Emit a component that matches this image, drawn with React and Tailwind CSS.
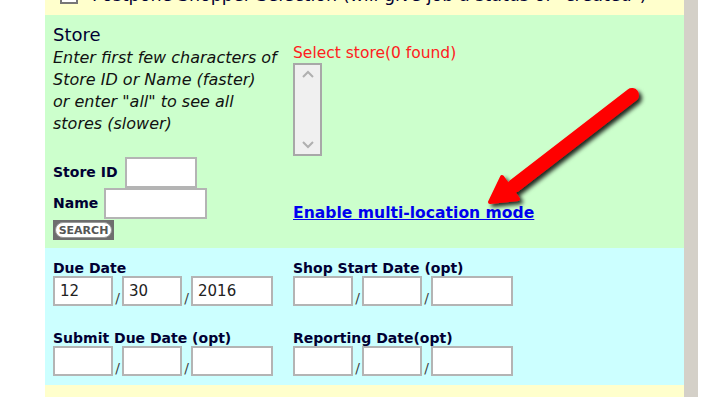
import React from 'react';

const font = { fontFamily: '"DejaVu Sans", Verdana, sans-serif' };

const Box = ({ w, value }) => (
  <input
    type="text"
    readOnly
    value={value || ''}
    className={`${w} h-[30px] border-2 border-[#b4b4b4] bg-white px-[5px] text-[15px] text-[#222] outline-none`}
  />
);

const DateRow = ({ label, values = [] }) => (
  <div>
    <div className="h-[16px] whitespace-nowrap text-[14px] font-bold leading-[16px] text-[#000033]">{label}</div>
    <div className="flex items-end">
      <Box w="w-[60px]" value={values[0]} />
      <span className="w-[9px] text-center text-[14px] leading-[16px] text-[#444]">/</span>
      <Box w="w-[60px]" value={values[1]} />
      <span className="w-[9px] text-center text-[14px] leading-[16px] text-[#444]">/</span>
      <Box w="w-[82px]" value={values[2]} />
    </div>
  </div>
);

const Arrow = () => (
  <svg className="absolute left-[425px] top-[70px]" width="180" height="150" viewBox="0 0 180 150">
    <defs>
      <filter id="sh" x="-20%" y="-20%" width="140%" height="140%">
        <feDropShadow dx="3" dy="3" stdDeviation="2" floodColor="#000" floodOpacity="0.85" />
      </filter>
    </defs>
    <g filter="url(#sh)">
      <line x1="162" y1="25" x2="44" y2="116" stroke="#ff0000" strokeWidth="14" strokeLinecap="round" />
      <polygon points="20,132 32,107 48,129" fill="#ff0000" stroke="#ff0000" strokeWidth="4" strokeLinejoin="round" />
    </g>
  </svg>
);

export default function App() {
  return (
    <div className="flex h-[397px] w-[709px] overflow-hidden bg-white" style={font}>
      <div className="w-[45px] shrink-0" />
      <div className="relative w-[639px] shrink-0">
        {/* checkbox strip, cut off at the top */}
        <div className="h-[15px] overflow-hidden bg-[#ffffcc]">
          <div className="-mt-[15px] flex items-center pl-[15px]">
            <span className="h-[17px] w-[18px] border-2 border-[#777] bg-white" />
            <span className="ml-[14px] whitespace-nowrap text-[17.5px] leading-[20px] text-[#000033]">
              Postpone Shopper Selection (will give job a status of "created")
            </span>
          </div>
        </div>

        {/* store section */}
        <div className="grid h-[233px] grid-cols-[240px_1fr] bg-[#ccffcc] pl-[8px] pt-[9px]">
          <div>
            <div className="text-[18px] leading-[22px] text-[#000033]">Store</div>
            <p className="mt-[1px] whitespace-nowrap text-[16px] italic leading-[22px] text-[#111]">
              Enter first few characters of
              <br />
              Store ID or Name (faster)
              <br />
              or enter "all" to see all
              <br />
              stores (slower)
            </p>
            <div className="mt-[22px] flex items-center">
              <span className="w-[72px] whitespace-nowrap text-[14px] font-bold text-[#000033]">Store ID</span>
              <input readOnly className="h-[31px] w-[72px] border-2 border-[#b4b4b4] bg-white outline-none" />
            </div>
            <div className="flex items-center">
              <span className="w-[51px] text-[14px] font-bold text-[#000033]">Name</span>
              <input readOnly className="h-[31px] w-[103px] border-2 border-[#b4b4b4] bg-white outline-none" />
            </div>
            <div className="mt-[1px] flex h-[20px] w-[61px] items-center justify-center bg-[#6e6e6e]">
              <span className="flex h-[16px] w-[57px] items-center justify-center rounded-full border border-[#999] bg-white text-[11px] font-bold leading-none text-[#555]">
                SEARCH
              </span>
            </div>
          </div>
          <div className="pt-[20px]">
            <div className="whitespace-nowrap text-[15.5px] leading-[18px] text-[#ff2020]">Select store(0 found)</div>
            <div className="mt-[1px] flex h-[93px] w-[29px] flex-col items-center justify-between border-2 border-[#a8a8a8] bg-[#f0f0f0] py-[5px]">
              <svg width="12" height="8" viewBox="0 0 12 8">
                <path d="M1 7 L6 2 L11 7" fill="none" stroke="#b0b0b0" strokeWidth="2" />
              </svg>
              <svg width="12" height="8" viewBox="0 0 12 8">
                <path d="M1 1 L6 6 L11 1" fill="none" stroke="#b0b0b0" strokeWidth="2" />
              </svg>
            </div>
            <a className="mt-[48px] block whitespace-nowrap text-[15.6px] font-bold leading-[18px] text-[#0000ee] underline" href="#">
              Enable multi-location mode
            </a>
          </div>
        </div>

        {/* dates section */}
        <div className="grid h-[137px] grid-cols-[240px_1fr] content-start gap-y-[24px] bg-[#ccffff] pl-[8px] pt-[12px]">
          <DateRow label="Due Date" values={['12', '30', '2016']} />
          <DateRow label="Shop Start Date (opt)" />
          <DateRow label="Submit Due Date (opt)" />
          <DateRow label="Reporting Date(opt)" />
        </div>

        <div className="h-[12px] bg-[#ffffcc]" />

        <Arrow />
      </div>
      <div className="w-[14px] shrink-0 bg-[#d4d0c8]" />
      <div className="flex-1" />
    </div>
  );
}
